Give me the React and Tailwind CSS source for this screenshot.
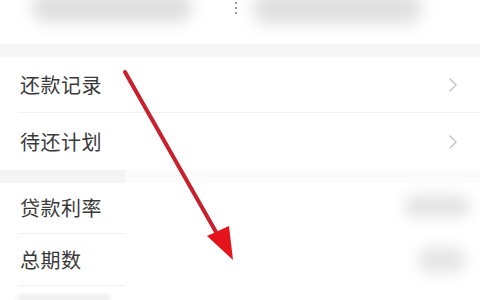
import React from 'react';

const rows = ['还款记录', '待还计划'];

const Chevron = () => (
    <svg width="10" height="16" viewBox="0 0 10 16" fill="none">
        <path d="M2 2l6 6-6 6" stroke="#c8c8c8" strokeWidth="1.6" strokeLinecap="round" strokeLinejoin="round" />
    </svg>
);

const App = () => {
    return (
        <div
            className="relative w-[480px] h-[300px] overflow-hidden bg-white text-[#3a3a3a]"
            style={{ fontFamily: '"Noto Sans CJK SC", "Noto Sans", sans-serif' }}
        >
            {/* blurred header amounts */}
            <div className="h-[44px] flex items-start overflow-hidden">
                <div className="ml-[32px] mt-[-8px] w-[160px] h-[30px] rounded-[14px] bg-[#dedede] blur-[8px]" />
                <div className="ml-[43px] mt-[2px] flex flex-col gap-[3px]">
                    <div className="w-[2px] h-[2px] bg-[#999]" />
                    <div className="w-[2px] h-[2px] bg-[#999]" />
                    <div className="w-[2px] h-[2px] bg-[#999]" />
                </div>
                <div className="ml-[16px] mt-[-8px] w-[168px] h-[32px] rounded-[14px] bg-[#e0e0e0] blur-[8px]" />
            </div>

            <div className="h-[13px] bg-[#f6f6f6]" />

            {/* menu rows */}
            <div>
                {rows.map((label, i) => (
                    <div key={label}>
                        <div className={`flex items-center justify-between pl-[20px] pr-[22px] ${i === 0 ? 'h-[55px]' : 'h-[57px]'}`}>
                            <span className="text-[20px] leading-none tracking-[0.5px]">{label}</span>
                            <Chevron />
                        </div>
                        {i === 0 && <div className="ml-[18px] h-px bg-[#f0f0f0]" />}
                    </div>
                ))}
            </div>

            <div className="flex h-[13px]">
                <div className="w-[125px] bg-[#f4f4f4]" />
                <div className="flex-1 bg-[#fbfbfb]" />
            </div>

            {/* loan details */}
            <div className="flex">
                <div className="w-[125px]">
                    <div className="h-[50px] flex items-center pl-[20px]">
                        <span className="text-[20px] leading-none tracking-[0.5px]">贷款利率</span>
                    </div>
                    <div className="ml-[18px] h-px bg-[#f0f0f0]" />
                    <div className="h-[51px] flex items-center pl-[20px]">
                        <span className="text-[20px] leading-none tracking-[0.5px]">总期数</span>
                    </div>
                    <div className="ml-[18px] h-px bg-[#f0f0f0]" />
                    <div className="mt-[9px] ml-[18px] w-[92px] h-[6px] bg-[#ececec] blur-[2px]" />
                </div>
                <div className="flex-1 flex flex-col items-end pr-[10px]">
                    <div className="mt-[12px] w-[66px] h-[22px] rounded-full bg-[#e4e4e4] blur-[7px]" />
                    <div className="mt-[30px] mr-[4px] w-[48px] h-[26px] rounded-full bg-[#e6e6e6] blur-[7px]" />
                </div>
            </div>

            {/* red annotation arrow */}
            <svg className="absolute left-0 top-0 pointer-events-none" width="480" height="300" viewBox="0 0 480 300">
                <line x1="125" y1="72" x2="216" y2="232" stroke="#c8202c" strokeWidth="4" strokeLinecap="round" />
                <polygon points="233,260 207,236 229,226" fill="#e5141c" />
            </svg>
        </div>
    );
};

export default App;
